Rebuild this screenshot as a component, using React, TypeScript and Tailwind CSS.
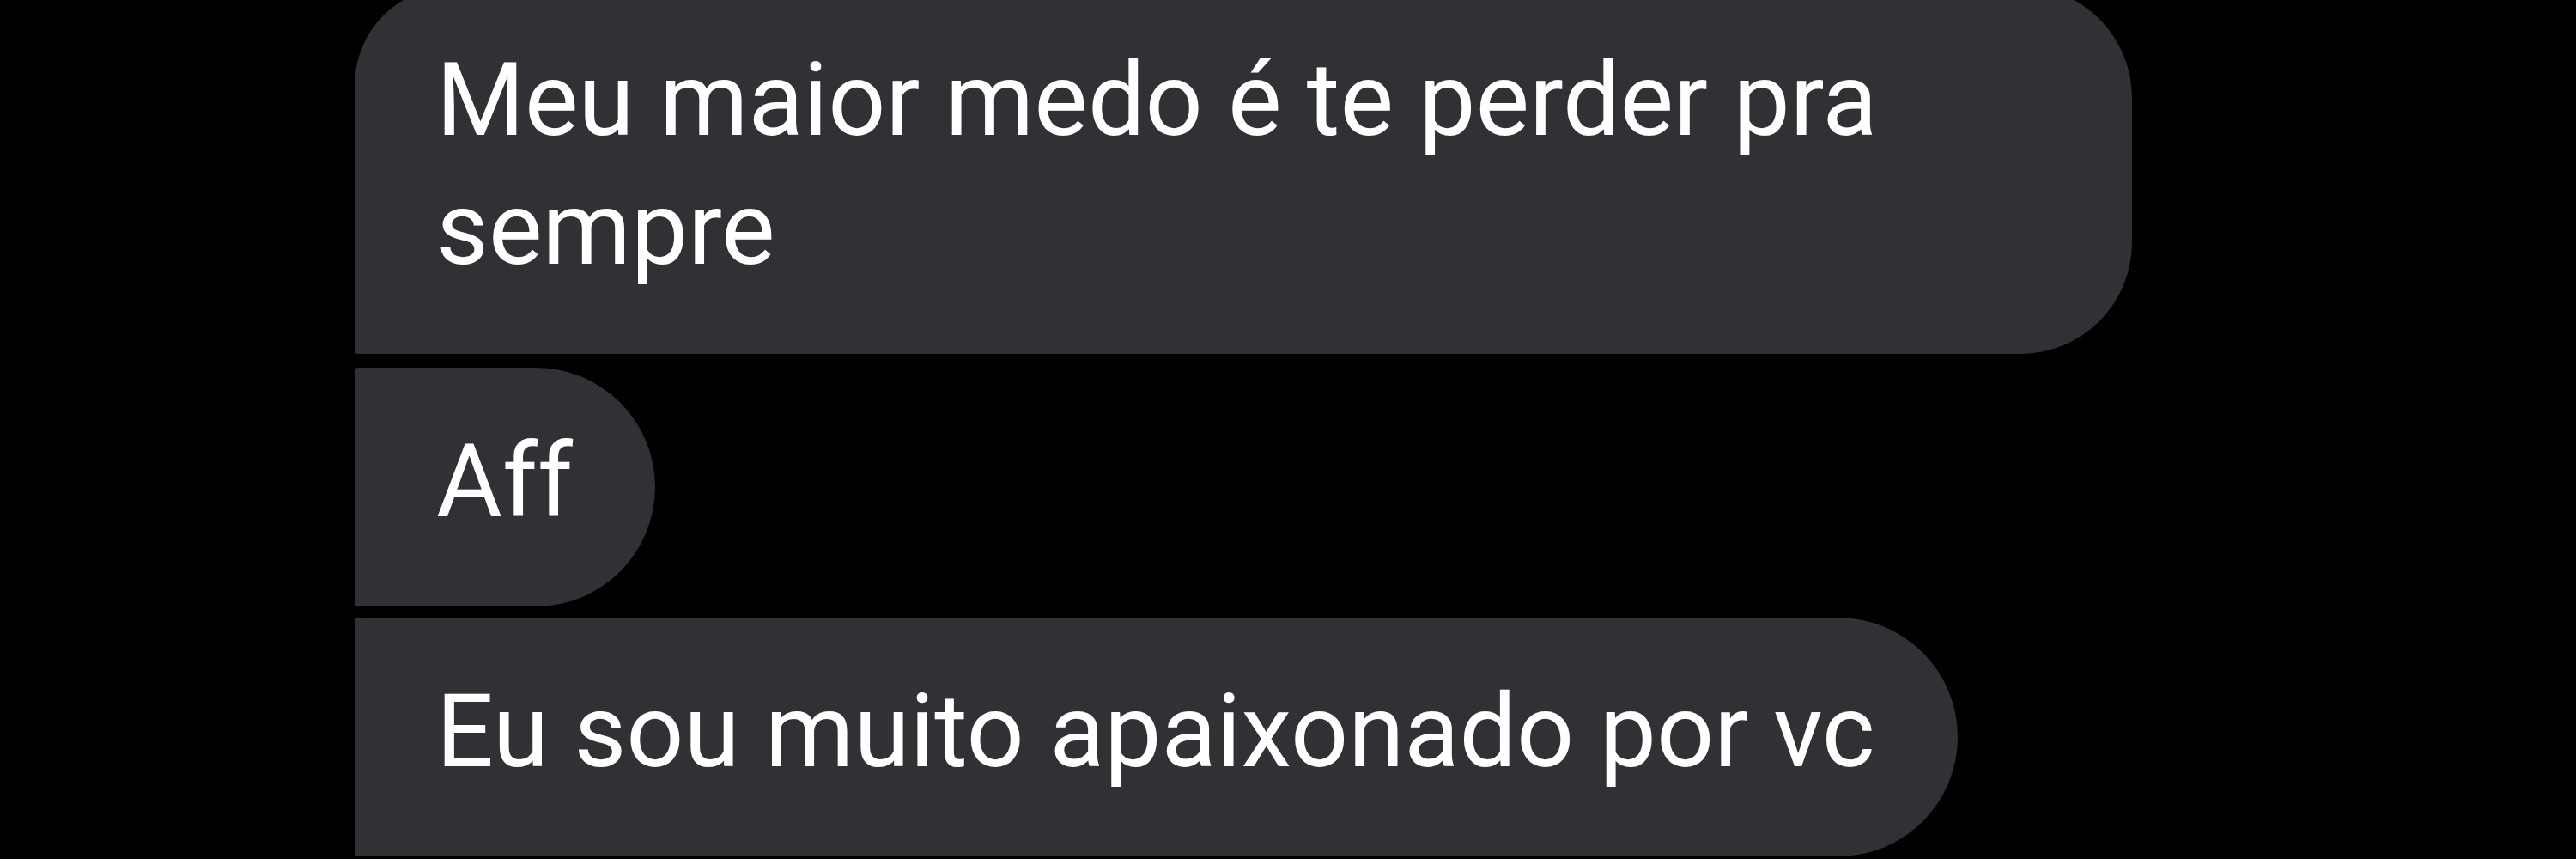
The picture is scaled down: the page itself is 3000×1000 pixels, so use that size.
import React from 'react';

type Message = {
  id: number;
  text: string;
  corners: string;
  spacing: string;
};

const messages: Message[] = [
  {
    id: 1,
    text: 'Meu maior medo é te perder pra sempre',
    corners: 'rounded-tl-[115px] rounded-tr-[130px] rounded-br-[130px] rounded-bl-[4px]',
    spacing: 'mb-4',
  },
  {
    id: 2,
    text: 'Aff',
    corners: 'rounded-tl-[4px] rounded-bl-[4px] rounded-tr-[140px] rounded-br-[140px]',
    spacing: 'mb-[13px]',
  },
  {
    id: 3,
    text: 'Eu sou muito apaixonado por vc',
    corners: 'rounded-tl-[4px] rounded-bl-[4px] rounded-tr-[140px] rounded-br-[140px]',
    spacing: '',
  },
];

export default function App() {
  return (
    <div className="w-full h-[1000px] bg-black overflow-hidden font-['Roboto',sans-serif]">
      {/* Received message group */}
      <div className="flex flex-col items-start pl-[413px] -mt-[16px]">
        {messages.map((msg) => (
          <div
            key={msg.id}
            className={`w-fit max-w-[2070px] bg-[#2f3134] text-white text-[118px] leading-[150px] pl-[95px] pr-[96px] pt-[58px] pb-[70px] ${msg.corners} ${msg.spacing}`}
          >
            {msg.text}
          </div>
        ))}
      </div>
    </div>
  );
}
